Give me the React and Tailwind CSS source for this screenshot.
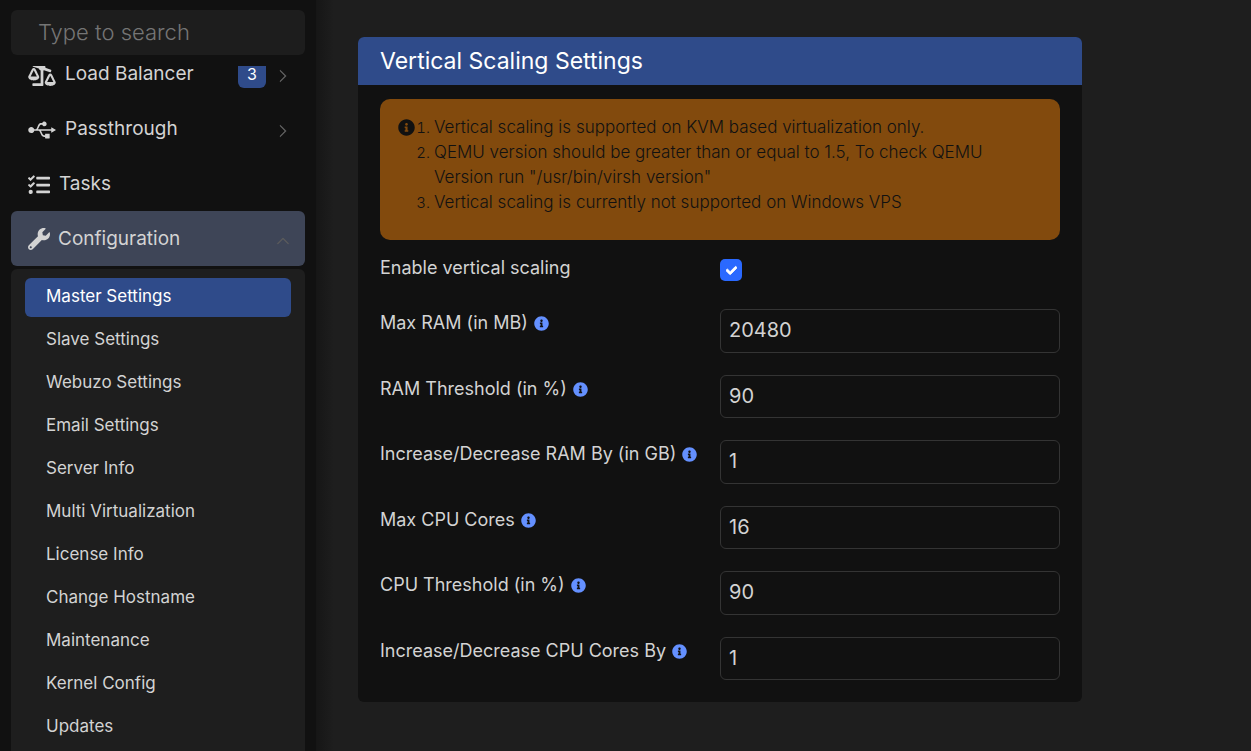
import React from "react";
import {
  FaBalanceScaleRight,
  FaCheck,
  FaInfoCircle,
  FaTasks,
  FaUsb,
  FaWrench,
} from "react-icons/fa";
import { BsChevronRight, BsChevronUp } from "react-icons/bs";

const menu = [
  {
    name: "Load Balancer",
    icon: FaBalanceScaleRight,
    iconWidth: "w-7",
    badge: 3,
    arrow: true,
  },
  { name: "Passthrough", icon: FaUsb, iconWidth: "w-7", arrow: true },
  { name: "Tasks", icon: FaTasks, iconWidth: "w-[22px]" },
];

const submenu = [
  "Master Settings",
  "Slave Settings",
  "Webuzo Settings",
  "Email Settings",
  "Server Info",
  "Multi Virtualization",
  "License Info",
  "Change Hostname",
  "Maintenance",
  "Kernel Config",
  "Updates",
];

const fields = [
  { id: "max_ram", label: "Max RAM (in MB)", value: "20480" },
  { id: "ram_threshold", label: "RAM Threshold (in %)", value: "90" },
  { id: "ram_step", label: "Increase/Decrease RAM By (in GB)", value: "1" },
  { id: "max_cores", label: "Max CPU Cores", value: "16" },
  { id: "cpu_threshold", label: "CPU Threshold (in %)", value: "90" },
  { id: "cpu_step", label: "Increase/Decrease CPU Cores By", value: "1" },
];

function MenuItem({ item }) {
  const Icon = item.icon;
  return (
    <a
      href="#"
      className="flex h-[55px] items-center rounded-md pr-[15px] pl-[17px]"
    >
      <Icon className={`mt-0.5 h-[22px] shrink-0 ${item.iconWidth}`} />
      <span className="ml-[9px] flex-1">{item.name}</span>
      {item.badge && (
        <span className="mr-[10px] rounded-md bg-[#2f4b8a] px-[9px] text-base leading-7 text-white">
          {item.badge}
        </span>
      )}
      {item.arrow && (
        <BsChevronRight
          size={14}
          strokeWidth={0.5}
          className="mt-1 text-[#6c6c6c]"
        />
      )}
    </a>
  );
}

function Sidebar() {
  return (
    <aside className="flex h-screen w-[316px] shrink-0 flex-col overflow-hidden bg-[#111111] px-[11px] pt-[10px] text-[19px] leading-7">
      <input
        type="search"
        aria-label="Search"
        placeholder="Type to search"
        className="h-[45px] w-full shrink-0 rounded-md bg-[#1d1d1d] px-[27px] pb-0.5 text-[22px] font-light outline-none placeholder:text-[#757575]"
      />
      <nav className="mt-[11px] min-h-0 flex-1 overflow-hidden">
        <div className="-mt-5">
          {menu.map((item) => (
            <MenuItem key={item.name} item={item} />
          ))}
          <button
            type="button"
            aria-expanded="true"
            className="flex h-[55px] w-full items-center rounded-md bg-[#3e4557] pr-[15px] pl-[17px] text-left"
          >
            <FaWrench size={22} className="shrink-0" />
            <span className="ml-2 flex-1">Configuration</span>
            <BsChevronUp
              size={14}
              strokeWidth={0.5}
              className="mt-1 text-[#5c5c5c]"
            />
          </button>
          <ul className="mt-[3px] space-y-1 rounded-md bg-[#1e1e1e] px-[14px] py-[9px] text-[17px]">
            {submenu.map((name, i) => (
              <li key={name}>
                <a
                  href="#"
                  className={`block rounded-md px-[21px] pb-0.5 leading-[37px] ${
                    i === 0 ? "bg-[#2f4b8a] text-white" : ""
                  }`}
                >
                  {name}
                </a>
              </li>
            ))}
          </ul>
        </div>
      </nav>
    </aside>
  );
}

function Notice() {
  return (
    <div className="flex rounded-[10px] bg-[#824a0d] pt-4 pr-[42px] pb-[25px] pl-[18px] leading-[25px] font-light text-[#111111]">
      <FaInfoCircle size={17} className="mt-1 shrink-0" />
      <ol className="list-decimal pl-[19px] text-[17px] marker:text-[15px]">
        <li>Vertical scaling is supported on KVM based virtualization only.</li>
        <li>
          QEMU version should be greater than or equal to 1.5, To check QEMU
          Version run "/usr/bin/virsh version"
        </li>
        <li>Vertical scaling is currently not supported on Windows VPS</li>
      </ol>
    </div>
  );
}

function Field({ field }) {
  return (
    <div className="group grid grid-cols-2">
      <label
        htmlFor={field.id}
        className="flex items-center gap-[6px] self-start leading-7 whitespace-nowrap"
      >
        {field.label}
        <FaInfoCircle size={15} className="shrink-0 text-[#6490ff]" />
      </label>
      <input
        id={field.id}
        type="text"
        defaultValue={field.value}
        className="h-11 w-full rounded-md border border-[#343434] bg-transparent px-2 pb-0.5 text-xl outline-none group-even:h-[43px]"
      />
    </div>
  );
}

export default function App() {
  return (
    <div className="flex h-screen bg-[#1e1e1e] font-['Inter','Noto_Sans',sans-serif] text-[#d3d3d3]">
      <Sidebar />
      <main className="min-w-0 flex-1 overflow-hidden bg-[linear-gradient(to_right,#161616,#1e1e1e_18px)] px-[42px] pt-[37px]">
        <section className="max-w-[724px] overflow-hidden rounded-md bg-[#111111] text-lg">
          <h1 className="bg-[#2f4b8a] px-[22px] text-[23px] leading-[48px] text-white">
            Vertical Scaling Settings
          </h1>
          <div className="px-[22px] pt-[14px] pb-[22px]">
            <Notice />
            <form>
              <div className="mt-[14px] mb-[22px] grid grid-cols-2">
                <label htmlFor="enable" className="leading-7">
                  Enable vertical scaling
                </label>
                <div className="relative h-[33px] pt-[5px]">
                  <input
                    id="enable"
                    type="checkbox"
                    defaultChecked
                    className="block size-[22px] appearance-none rounded-[5px] bg-[#2a69ff]"
                  />
                  <FaCheck
                    size={11}
                    strokeWidth={40}
                    className="pointer-events-none absolute top-[11px] left-[6px] text-white"
                  />
                </div>
              </div>
              <div className="space-y-[22px]">
                {fields.map((field) => (
                  <Field key={field.id} field={field} />
                ))}
              </div>
            </form>
          </div>
        </section>
      </main>
    </div>
  );
}
